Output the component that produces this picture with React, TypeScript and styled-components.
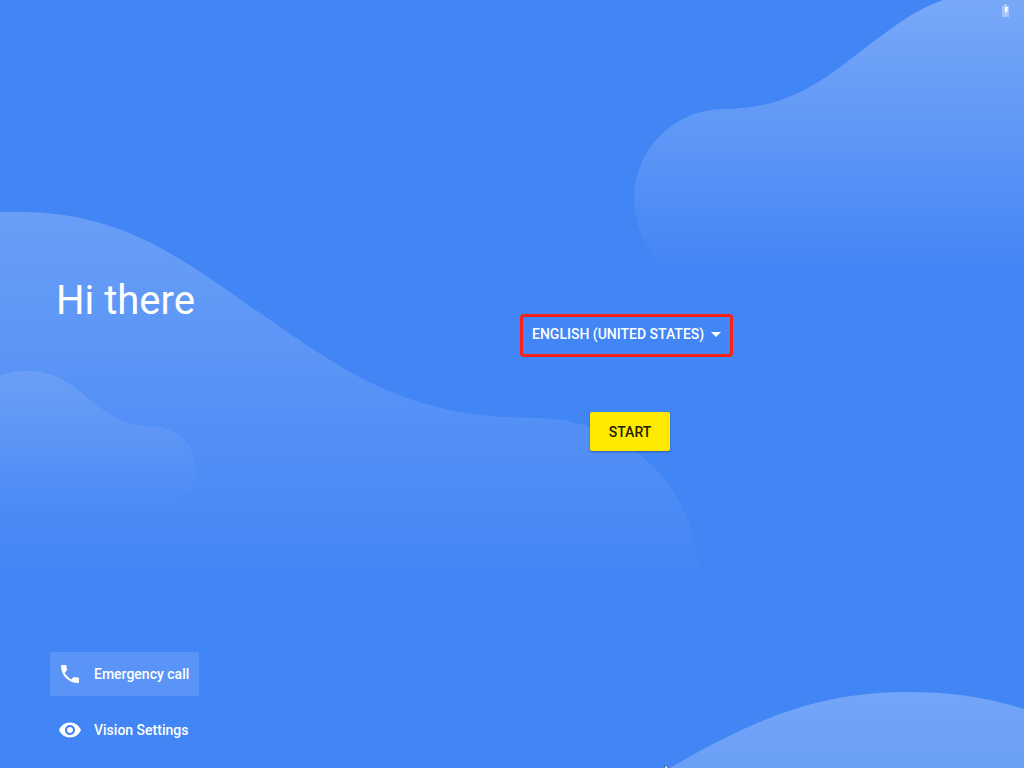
import React from "react";
import styled, { createGlobalStyle } from "styled-components";

const GlobalStyle = createGlobalStyle`
  * { box-sizing: border-box; }
  body {
    margin: 0;
    background: #4285f5;
    color: #fff;
    font-family: Roboto, "Liberation Sans", sans-serif;
  }
`;

const Page = styled.div`
  position: relative;
  display: flex;
  flex-direction: column;
  min-height: 100vh;
  overflow: hidden;
`;

const Artwork = styled.svg`
  position: absolute;
  inset: 0;
  width: 100%;
  height: 100%;
  pointer-events: none;
`;

const StatusBar = styled.header`
  position: relative;
  display: flex;
  justify-content: flex-end;
  height: 24px;
  padding: 4px 15px 0 0;
`;

const Hero = styled.main`
  position: relative;
  flex: 1;
  display: grid;
  grid-template-columns: 1fr 1fr;
  align-items: start;
`;

const Title = styled.h1`
  margin: 0;
  padding: 253px 0 0 56px;
  font-size: 40px;
  line-height: 48px;
  font-weight: 400;
`;

const Actions = styled.form`
  display: flex;
  flex-direction: column;
  gap: 55px;
  width: 228px;
  padding: 290px 0 0 8px;
`;

const LanguageField = styled.div`
  display: grid;
  align-items: center;
  align-self: flex-start;
  border: 3px solid #fb2018;
  border-radius: 4px;
  height: 43px;

  > * { grid-area: 1 / 1; }
`;

const LanguageSelect = styled.select`
  appearance: none;
  height: 100%;
  padding: 0 25px 3px 9px;
  border: 0;
  background: transparent;
  color: inherit;
  font: 500 14px/20px Roboto, "Liberation Sans", sans-serif;
  text-transform: uppercase;
`;

const Caret = styled.svg`
  justify-self: end;
  width: 24px;
  height: 24px;
  margin: 0 2px 3px 0;
  pointer-events: none;
`;

const StartButton = styled.button`
  align-self: center;
  width: 80px;
  height: 39px;
  padding: 0;
  border: 0;
  border-radius: 2px;
  background: #ffea00;
  color: #212100;
  box-shadow: 0 1px 2px rgba(0, 0, 0, 0.35);
  font: 500 14px/20px Roboto, "Liberation Sans", sans-serif;
`;

const Footer = styled.footer`
  position: relative;
  display: flex;
  flex-direction: column;
  align-items: flex-start;
  gap: 12px;
  padding: 0 50px 16px;
`;

const FooterButton = styled.button<{ $active?: boolean }>`
  display: flex;
  align-items: center;
  gap: 12px;
  height: 44px;
  padding: 0 10px 0 8px;
  border: 0;
  border-radius: 2px;
  background: ${(p) => (p.$active ? "rgba(255, 255, 255, 0.13)" : "transparent")};
  color: inherit;
  font: 500 14px/20px Roboto, "Liberation Sans", sans-serif;
`;

const Icon = styled.svg`
  width: 24px;
  height: 24px;
  fill: currentColor;
`;

type FadeProps = { id: string; top: number; bottom: number; strength: number };

const Fade = ({ id, top, bottom, strength }: FadeProps) => (
  <linearGradient id={id} gradientUnits="userSpaceOnUse" x1="0" x2="0" y1={top} y2={bottom}>
    <stop offset="0" stopColor="#fff" stopOpacity={strength} />
    <stop offset="1" stopColor="#fff" stopOpacity="0" />
  </linearGradient>
);

const Waves = () => (
  <Artwork viewBox="0 0 1024 768" preserveAspectRatio="none" aria-hidden="true">
    <defs>
      <Fade id="sky" top={0} bottom={275} strength={0.29} />
      <Fade id="hill" top={212} bottom={590} strength={0.21} />
      <Fade id="knoll" top={371} bottom={512} strength={0.11} />
      <Fade id="rise" top={692} bottom={1200} strength={0.26} />
    </defs>
    <path
      fill="url(#sky)"
      d="M1024 0H943C915 10 897 24 873 42C830 74 795 109 724 109A90 90 0 0 0 724 289H1024Z"
    />
    <path
      fill="url(#hill)"
      d="M0 212H20C130 212 192 267 267 318C345 371 405 418 537 418A163 163 0 0 1 700 581V600H0Z"
    />
    <path
      fill="url(#knoll)"
      d="M0 376Q12 371 27 371C60 371 78 390 95 404C113 418 130 427 154 427A42 42 0 0 1 154 511H0Z"
    />
    <path fill="url(#rise)" d="M670 768C760 715 825 692 907 692C950 692 985 697 1024 709V768Z" />
    <path fill="#fff" stroke="#334" strokeWidth="0.5" d="M665 765V775L671 770.5Z" />
  </Artwork>
);

export default function App() {
  return (
    <Page>
      <GlobalStyle />
      <Waves />
      <StatusBar>
        <svg width="7" height="13" viewBox="0 0 7 13" role="img" aria-label="Battery charging">
          <path fill="#fff" fillOpacity="0.35" d="M2 0H5V2H7V13H0V2H2Z" />
          <path fill="#fff" d="M3 3H6L5 6H6L3 11L4 8H3Z" />
        </svg>
      </StatusBar>
      <Hero>
        <Title>Hi there</Title>
        <Actions>
          <LanguageField>
            <LanguageSelect aria-label="Language" defaultValue="en-US">
              <option value="en-US">English (United States)</option>
            </LanguageSelect>
            <Caret viewBox="0 0 24 24" aria-hidden="true">
              <path fill="#fff" d="M7 10l5 5 5-5z" />
            </Caret>
          </LanguageField>
          <StartButton type="button">START</StartButton>
        </Actions>
      </Hero>
      <Footer>
        <FooterButton type="button" $active>
          <Icon viewBox="0 0 24 24" aria-hidden="true">
            <path d="M6.62 10.79c1.44 2.83 3.76 5.14 6.59 6.59l2.2-2.2c.27-.27.67-.36 1.02-.24 1.12.37 2.33.57 3.57.57.55 0 1 .45 1 1V20c0 .55-.45 1-1 1-9.39 0-17-7.61-17-17 0-.55.45-1 1-1h3.5c.55 0 1 .45 1 1 0 1.25.2 2.45.57 3.57.11.35.03.74-.25 1.02l-2.2 2.2z" />
          </Icon>
          Emergency call
        </FooterButton>
        <FooterButton type="button">
          <Icon viewBox="0 0 24 24" aria-hidden="true">
            <path d="M12 4.5C7 4.5 2.73 7.61 1 12c1.73 4.39 6 7.5 11 7.5s9.270-3.110 11-7.500c-1.730-4.390-6-7.500-11-7.500zM12 17c-2.760 0-5-2.240-5-5s2.240-5 5-5 5 2.240 5 5-2.240 5-5 5zm0-8c-1.660 0-3 1.340-3 3s1.340 3 3 3 3-1.340 3-3-1.340-3-3-3z" />
          </Icon>
          Vision Settings
        </FooterButton>
      </Footer>
    </Page>
  );
}
